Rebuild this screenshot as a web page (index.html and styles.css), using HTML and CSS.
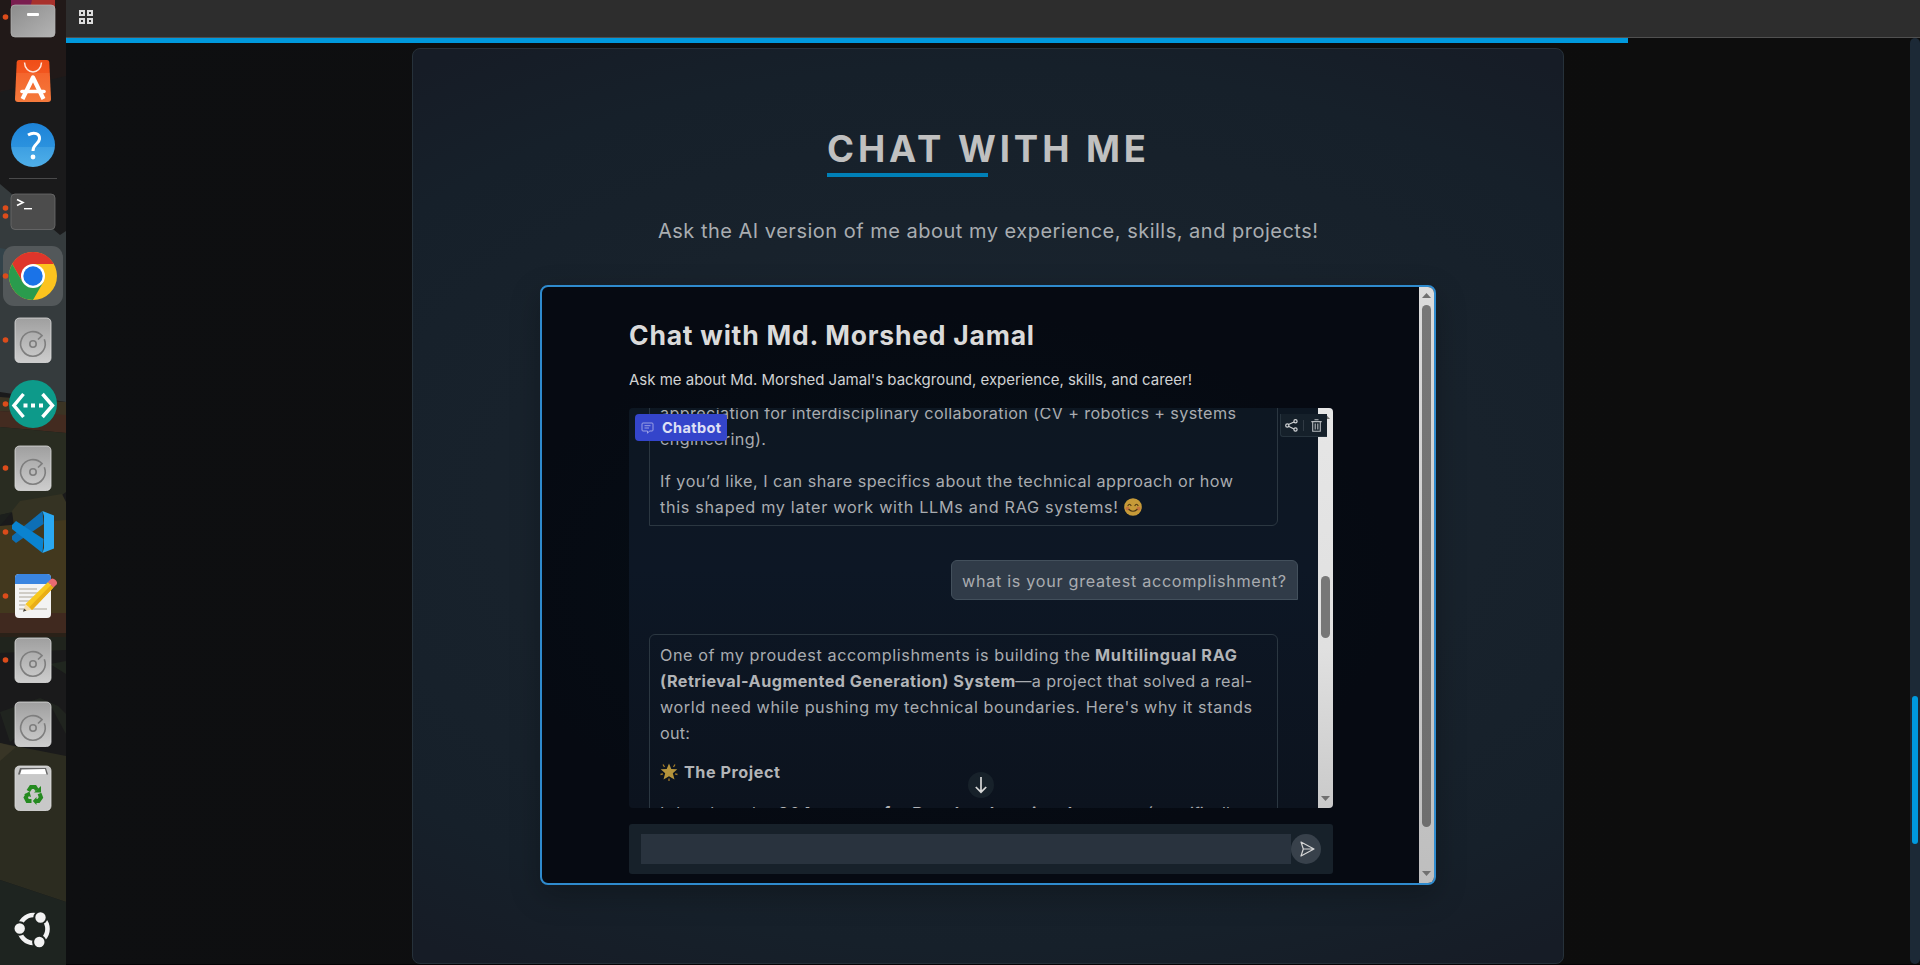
FILE: index.html
```html
<!DOCTYPE html>
<html lang="en">
<head>
<meta charset="utf-8">
<title>Chat with me</title>
<link rel="stylesheet" href="styles.css">
</head>
<body>
<svg class="defs" width="0" height="0" aria-hidden="true">
  <defs>
    <linearGradient id="metal" x1="0" y1="0" x2="0" y2="1"><stop offset="0" stop-color="#9f9f9f"/><stop offset="1" stop-color="#cdcdcd"/></linearGradient>
    <linearGradient id="metal2" x1="0" y1="0" x2="1" y2="1"><stop offset="0" stop-color="#8c8c8c"/><stop offset="1" stop-color="#b4b4b4"/></linearGradient>
    <linearGradient id="help" x1="0" y1="0" x2="0" y2="1"><stop offset="0" stop-color="#1d83d8"/><stop offset=".54" stop-color="#2b92de"/><stop offset=".55" stop-color="#3d9fe2"/><stop offset="1" stop-color="#4fafe9"/></linearGradient>
    <linearGradient id="bag" x1="0" y1="0" x2="0" y2="1"><stop offset="0" stop-color="#f04e17"/><stop offset=".3" stop-color="#f2561f"/><stop offset=".31" stop-color="#f4652d"/><stop offset="1" stop-color="#f57a3c"/></linearGradient>
    <symbol id="disk" viewBox="0 0 66 64">
      <rect x="15" y="10" width="36" height="44.500" rx="4.500" fill="url(#metal)" stroke="#dedede" stroke-width=".8"/>
      <path d="M44.300 31.200A12.300 12.300 0 1 1 42 27.600L38 31.500" fill="none" stroke="#7e7e7e" stroke-width="1.600"/>
      <circle cx="33" cy="36" r="3.200" fill="none" stroke="#7e7e7e" stroke-width="1.600"/>
    </symbol>
  </defs>
</svg>
<div class="desktop">
  <nav class="dock">
    <svg class="wallpaper" viewBox="0 0 66 965" width="66" height="965">
      <rect width="66" height="965" fill="#1a1a1b"/>
      <path d="M0 0H66V76L40 82 0 92Z" fill="#211918"/>
      <path d="M0 184 40 218 60 235 66 231V402L0 392Z" fill="#353b3d"/>
      <path d="M0 248 34 254 0 276Z" fill="#33434a"/>
      <path d="M0 397 66 402V417L0 411Z" fill="#3b3424"/>
      <path d="M0 411 66 415V433L0 427Z" fill="#432b20"/>
      <path d="M0 427 66 433V492L62 495 30 500 15 512 0 515Z" fill="#292c21"/>
      <path d="M0 515 12 512 0 526Z" fill="#1c1f1c"/>
      <path d="M12 511 20 501 62 494 66 502V522L14 526Z" fill="#353323"/>
      <path d="M0 526 66 520V613H0Z" fill="#42381e"/>
      <path d="M0 613H66V633H0Z" fill="#40291f"/>
      <path d="M0 633H66V637H0Z" fill="#2a2118"/>
      <path d="M0 637H66V650L0 653Z" fill="#20241d"/>
      <path d="M50 664 66 661V674Z" fill="#20261f"/>
      <path d="M0 712 40 698 58 706 66 714V734L52 708 10 742Z" fill="#20241f"/>
      <path d="M0 743 66 756V902L0 880Z" fill="#2c2c20"/>
      <path d="M0 743 16 747 0 761Z" fill="#383526"/>
      <path d="M0 880 66 902V965H0Z" fill="#1e2420"/>
    </svg>
    <svg class="slot" viewBox="0 0 66 64"><path d="M11 6H55V24H11Z" fill="#a8312c"/><path d="M11 6H34L30 24H11Z" fill="#7a1e50"/><rect x="11" y="20" width="44" height="32" rx="4" fill="url(#metal2)" stroke="#b5b5b5" stroke-width=".7"/><rect x="27" y="28" width="12" height="3" rx="1" fill="#fff"/><circle class="run" cx="5.500" cy="32" r="2.800"/></svg>
    <svg class="slot" viewBox="0 0 66 64"><path d="M19 11H47Q49 11 49.300 13L51 50Q51 53 48 53H18Q15 53 15 50L16.700 13Q17 11 19 11Z" fill="url(#bag)"/><path d="M24.500 13.500C25 26 41 26 41.500 13.500" fill="none" stroke="#fde7dd" stroke-width="1.500"/><path d="M22.500 50 33 28.500 43.500 50" fill="none" stroke="#fff" stroke-width="4.200" stroke-linejoin="round"/><path d="M22 42.500H44" stroke="#fff" stroke-width="3.600" stroke-linecap="round"/></svg>
    <svg class="slot" viewBox="0 0 66 64"><circle cx="33" cy="32" r="22" fill="url(#help)"/><path d="M28 22C34 18.500 40 20.500 39.500 26C39 31 33 31 33 38" fill="none" stroke="#fff" stroke-width="3"/><circle cx="33" cy="44" r="2.400" fill="#fff"/></svg>
    <div class="rule"></div>
    <svg class="slot" viewBox="0 0 66 64"><rect x="11" y="14" width="44" height="35.500" rx="4" fill="#4c4c4c" stroke="#6c6c6c" stroke-width=".8"/><path d="M17 19.500 23 22.500 17 25.500" fill="none" stroke="#fff" stroke-width="1.600"/><path d="M24 28.700H32" stroke="#fff" stroke-width="1.400"/><circle class="run" cx="5.500" cy="28" r="2.800"/><circle class="run" cx="5.500" cy="36" r="2.800"/></svg>
    <svg class="slot" viewBox="0 0 66 64"><rect x="3" y="2" width="60" height="60" rx="11" fill="#53585a"/><circle cx="33" cy="32" r="24" fill="#fcc31e"/><path d="M33 32 22.600 38 12.200 20A24 24 0 0 1 53.800 20H33Z" fill="#df352b"/><path d="M12.200 20 22.600 38 43.400 38 33 56A24 24 0 0 1 12.200 20Z" fill="#2a9b4d"/><circle cx="33" cy="32" r="12" fill="#fff"/><circle cx="33" cy="32" r="9.700" fill="#1a73e8"/><circle class="run" cx="5.500" cy="32" r="2.800"/></svg>
    <svg class="slot" viewBox="0 0 66 64"><use href="#disk"/><circle class="run" cx="5.500" cy="32" r="2.800"/></svg>
    <svg class="slot" viewBox="0 0 66 64"><circle cx="33" cy="32" r="24" fill="#0d9a8a"/><path d="M23.500 22 14 33.500 23.500 45M42.500 22 52.500 33.500 42.500 45" fill="none" stroke="#fff" stroke-width="3.500"/><path d="M23.500 31.500h4v4h-4zM31 31.500h4v4h-4zM39 31.500h4v4h-4z" fill="#fff"/><circle class="run" cx="5.500" cy="32" r="2.800"/></svg>
    <svg class="slot" viewBox="0 0 66 64"><use href="#disk"/><circle class="run" cx="5.500" cy="32" r="2.800"/></svg>
    <svg class="slot" viewBox="0 0 66 64"><path d="M42.500 11 43.500 24 16 43 12 39.500V36Z" fill="#0d6fb5"/><path d="M12 25 16 21 43.500 39 42.500 53 12 29Z" fill="#0a83d0"/><path d="M42.500 11 54 15.500V48.500L42.500 53 44 48V16Z" fill="#2aa8f2"/><circle class="run" cx="5.500" cy="32" r="2.800"/></svg>
    <svg class="slot" viewBox="0 0 66 64"><rect x="15" y="10" width="36" height="44" rx="4" fill="#f3f3f3"/><path d="M15 20V14Q15 10 19 10H47Q51 10 51 14V20Z" fill="#3a85e0"/><path d="M19 25H37M19 29H39M19 33H36M19 37H33M19 41H31M19 45H47" stroke="#c4c0b6" stroke-width="1.500"/><path d="M23 47.500 25.500 40 32.500 45.500Z" fill="#f5dfae"/><path d="M25.500 40 48 18 53.500 23.500 32 46Z" fill="#f8c91f"/><path d="M29.500 43 51 21 53.500 23.500 32 46Z" fill="#e9ae17"/><path d="M48 18 51 15Q53 13.500 55.500 16Q58 18.500 56.500 20.500L53.500 23.500Z" fill="#e96a72"/><path d="M23 47.800 24 44.500 26.500 46.500Z" fill="#444"/><circle class="run" cx="5.500" cy="32" r="2.800"/></svg>
    <svg class="slot" viewBox="0 0 66 64"><use href="#disk"/><circle class="run" cx="5.500" cy="32" r="2.800"/></svg>
    <svg class="slot" viewBox="0 0 66 64"><use href="#disk"/></svg>
    <svg class="slot" viewBox="0 0 66 64"><rect x="15" y="10" width="36" height="44.500" rx="4.500" fill="#c8c8c8" stroke="#dedede" stroke-width=".8"/><path d="M18 18.500 20 12H46L48 18.500Z" fill="#666"/><path d="M20 18.500 21.500 13.500 45 13 46.500 18.500Z" fill="#fff"/><g fill="none" stroke="#258a20" stroke-width="4"><path d="M28.300 35 31 31H35L37 34"/><path d="M39.500 37.500 41 41.500 38.500 45H35.500"/><path d="M31.500 45H27.500L25.700 41.500 27.500 38.500"/></g><path d="M34 36.500H41V30ZM36.500 41V49L32.800 45ZM24 38.500 29.500 35.500 31 41Z" fill="#258a20"/></svg>
    <svg class="slot launcher" viewBox="0 0 66 64"><circle cx="33.500" cy="32" r="14" fill="none" stroke="#f2f2f2" stroke-width="4.600"/><g fill="#f2f2f2" stroke="#1e2420" stroke-width="2"><circle cx="19.700" cy="31.500" r="6.200"/><circle cx="40.500" cy="20.500" r="6.200"/><circle cx="39.300" cy="45" r="6.200"/></g></svg>
  </nav>
  <div class="browser">
    <header class="tabbar">
      <svg width="14" height="14" viewBox="0 0 14 14"><path d="M1 1h4v4h-4zM9 1h4v4h-4zM1 9h4v4h-4zM9 9h4v4h-4z" fill="none" stroke="#dcdcdc" stroke-width="2"/></svg>
    </header>
    <div class="viewport">
      <main class="page">
        <div class="progress"></div>
        <section class="card">
          <h1 class="title"><span data-width="319">CHAT WITH ME</span></h1>
          <p class="lead"><span data-width="660">Ask the AI version of me about my experience, skills, and projects!</span></p>
          <div class="frame">
            <div class="app">
              <h2 class="app-title"><span data-width="405">Chat with Md. Morshed Jamal</span></h2>
              <p class="app-lead"><span data-width="563">Ask me about Md. Morshed Jamal's background, experience, skills, and career!</span></p>
              <div class="panel">
                <div class="log">
                  <div class="msg bot first">
                    <p><span data-width="576">appreciation for interdisciplinary collaboration (CV + robotics + systems</span></p>
                    <p><span data-width="106">engineering).</span></p>
                    <p class="para"><span data-width="573">If you’d like, I can share specifics about the technical approach or how</span></p>
                    <p><span data-width="458">this shaped my later work with LLMs and RAG systems!</span>
                      <svg class="emoji smile" viewBox="0 0 18 18"><circle cx="9" cy="9" r="8.800" fill="#c69a38"/><circle cx="3.500" cy="10.500" r="2" fill="#c4743c"/><circle cx="14.500" cy="10.500" r="2" fill="#c4743c"/><path d="M4 7.500Q5.500 5 7 7.500M11 7.500Q12.500 5 14 7.500M5 11.500Q9 15 13 11.500" fill="none" stroke="#4a3514" stroke-width="1.200" stroke-linecap="round"/></svg></p>
                  </div>
                  <div class="msg user"><p><span data-width="324">what is your greatest accomplishment?</span></p></div>
                  <div class="msg bot">
                    <p><span data-width="430">One of my proudest accomplishments is building the</span><b class="mid" data-width="147">Multilingual RAG</b></p>
                    <p><b data-width="355">(Retrieval-Augmented Generation) System</b><span data-width="237">—a project that solved a real-</span></p>
                    <p><span data-width="592">world need while pushing my technical boundaries. Here's why it stands</span></p>
                    <p><span data-width="30">out:</span></p>
                    <p class="heading"><svg class="emoji star" viewBox="0 0 18 18"><path d="M9 .5 11.300 6 17.300 6.300 12.800 10.300 14.500 16.500 9 13.200 3.500 16.500 5.200 10.300 .7 6.300 6.700 6Z" fill="#b5943c"/><path d="M3 1.500 4.500 4M15 1.500 13.500 4M.5 11.500 3 10.800M17.500 11.500 15 10.800M9 15.500V18" stroke="#a17927" stroke-width="1.300"/></svg><b data-width="96">The Project</b></p>
                    <p class="heading next"><span data-width="111">I developed a</span><b class="mid2" data-width="376">Q&amp;A system for Bangla educational content</b><span data-width="92">(specifically</span></p>
                  </div>
                </div>
                <div class="bar">
                  <svg class="arrow" viewBox="0 0 9 5"><path d="M0 5 4.500 0 9 5Z"/></svg>
                  <div class="thumb inner"></div>
                  <svg class="arrow" viewBox="0 0 9 5"><path d="M0 0 4.500 5 9 0Z"/></svg>
                </div>
                <div class="label"><svg width="13" height="12" viewBox="0 0 13 12"><path d="M2 1H11Q12 1 12 2V8Q12 9 11 9H8.500L6.500 11.300V9H2Q1 9 1 8V2Q1 1 2 1ZM3.500 3.700H9.500M3.500 6H8" fill="none" stroke="#a5a9e6" stroke-width=".9"/></svg><b data-width="59">Chatbot</b></div>
                <div class="tools">
                  <svg width="13" height="13" viewBox="0 0 13 13"><path d="M3.500 5.600 9 3M3.500 7.200 9 10" stroke="#d2d4d6" stroke-width="1.100"/><g fill="none" stroke="#d2d4d6" stroke-width="1.200"><circle cx="2.300" cy="6.500" r="1.600"/><circle cx="10.500" cy="2.300" r="1.600"/><circle cx="10.500" cy="10.500" r="1.600"/></g></svg>
                  <i></i>
                  <svg width="11" height="13" viewBox="0 0 11 13"><path d="M.3 2.600H10.700M3.500 .7H7.500M1.700 2.600V12.300H9.300V2.600M4.200 4.500V10.500M6.800 4.500V10.500" fill="none" stroke="#b6babe" stroke-width="1.100"/></svg>
                </div>
                <div class="down"><svg width="14" height="18" viewBox="0 0 14 18"><path d="M7 1V16M1.800 11 7 16.200 12.200 11" fill="none" stroke="#d8d8d8" stroke-width="1.700"/></svg></div>
              </div>
              <div class="composer">
                <div class="input"></div>
                <div class="send"><svg width="15" height="16" viewBox="0 0 15 16"><path d="M1 1 14 8 1 15 3.300 8ZM3.300 8H14" fill="none" stroke="#d5d5d5" stroke-width="1.200" stroke-linejoin="round"/></svg></div>
              </div>
            </div>
            <div class="bar outer">
              <svg class="arrow" viewBox="0 0 9 5"><path d="M0 5 4.500 0 9 5Z"/></svg>
              <div class="thumb"></div>
              <svg class="arrow" viewBox="0 0 9 5"><path d="M0 0 4.500 5 9 0Z"/></svg>
            </div>
          </div>
        </section>
      </main>
      <div class="page-bar"><div class="page-thumb"></div></div>
    </div>
  </div>
</div>
<script src="fit.js"></script>
</body>
</html>
```

FILE: fit.js
```js
document.querySelectorAll("[data-width]").forEach(function (el) {
  var want = parseFloat(el.dataset.width);
  el.style.letterSpacing = "0px";
  var count = el.textContent.length;
  var gap = (want - el.getBoundingClientRect().width) / (count - 1);
  el.style.letterSpacing = gap + "px";
  el.style.marginRight = -gap + "px";
});
```

FILE: styles.css
```css
* { box-sizing: border-box; }
body { margin: 0; background: #0d0d0d; font-family: Inter, "Open Sans", sans-serif; overflow: hidden; }
h1, h2, p { margin: 0; }
.defs { position: absolute; }
.desktop { display: flex; width: 1920px; height: 965px; overflow: hidden; }

.dock { position: relative; flex: none; width: 66px; height: 965px; overflow: hidden; display: flex; flex-direction: column; }
.wallpaper { position: absolute; inset: 0; }
.slot { position: relative; flex: none; width: 66px; height: 64px; }
.slot:nth-of-type(2) { margin-top: -15px; }
.rule { position: relative; flex: none; height: 1px; width: 48px; margin: 1px 9px; background: #4a4a4b; }
.launcher { margin-top: 77px; }
.run { fill: #dc4c1b; }

.browser { flex: 1; display: flex; flex-direction: column; min-width: 0; }
.tabbar { flex: none; height: 38px; background: #2d2d2d; border-bottom: 1px solid #505050; padding: 10px 13px; }
.tabbar svg { display: block; }
.viewport { flex: 1; display: flex; min-height: 0; border-bottom: 1px solid #050305; }
.page { flex: 1; background: linear-gradient(90deg, #0e0f11, #0d0d0d 85%); }
.progress { width: 1562px; height: 5px; background: #0099dd; }
.page-bar { width: 10px; border-radius: 5px; background: #1c2936; padding: 658px 2px 0; }
.page-thumb { height: 148px; border-radius: 3px; background: #0099dd; }

.card { width: 1152px; height: 916px; margin: 5px 0 0 346px; border: 1px solid #26313a; border-radius: 8px; background: radial-gradient(ellipse 900px 520px at 50% 50%, #1a2632 0%, #18222c 55%, #16202a 85%, #161c26 105%); display: flex; flex-direction: column; align-items: center; padding-top: 75px; }
.title { width: 322px; height: 53px; font-weight: 700; font-size: 36.500px; line-height: 50px; color: #c0c0c0; white-space: nowrap; background: linear-gradient(#0080b8, #0080b8) 0 100% / 161px 4px no-repeat; }
.lead { width: 660px; margin-top: 39px; font-size: 20px; line-height: 30px; color: #a9adb1; white-space: nowrap; }

.frame { width: 896px; height: 600px; margin-top: 39px; border: 2px solid #2f8bce; border-radius: 8px; overflow: hidden; display: flex; background: radial-gradient(ellipse at 45% 50%, #050f17, #060a12 65%); box-shadow: 0 10px 30px rgba(0, 0, 0, .25); }
.app { flex: 1; padding: 30px 86px 0 87px; min-width: 0; }
.app-title { font-size: 26.500px; font-weight: 700; line-height: 36px; color: #dadada; white-space: nowrap; }
.app-lead { margin-top: 15px; font-size: 15px; line-height: 24px; color: #d0d2d3; white-space: nowrap; }

.panel { position: relative; display: flex; height: 400px; margin-top: 16px; border-radius: 4px; overflow: hidden; background: linear-gradient(#0d1722, #0d1725 40%, #0c131e); }
.log { flex: 1; height: 400px; overflow: hidden; display: flex; flex-direction: column; align-items: flex-start; padding: 0 20px; }
.msg { flex: none; padding: 7px 10px 5px; border: 1px solid #2b3741; font-size: 16.200px; line-height: 26px; color: #a9acb0; white-space: nowrap; }
.msg p { display: flex; height: 26px; align-items: baseline; }
.bot { width: 629px; border-radius: 6px 6px 6px 0; }
.first { margin-top: -16px; border-radius: 0 0 6px 0; }
.msg .para { margin-top: 16px; }
.msg .heading { margin-top: 13px; }
.msg .next { margin-top: 15px; }
.user { align-self: flex-end; width: 347px; margin: 34px 0; background: #303b48; border-color: #43505c; border-radius: 6px 6px 0 6px; }
.mid { padding-left: 5px; }
.mid2 { padding: 0 6px; }
.msg b { color: #b2b4b7; }
.emoji { flex: none; width: 18px; height: 18px; align-self: center; }
.smile { margin-left: 6px; }
.star { margin-right: 6px; }

.bar { flex: none; width: 15px; background: linear-gradient(#e6e6e6, #e0e0e0 60%, #cacaca); display: flex; flex-direction: column; align-items: center; padding: 6px 0 7px; }
.arrow { flex: none; display: block; width: 9px; height: 5px; fill: #707070; }
.thumb { flex: none; width: 9px; border-radius: 5px; background: #777; height: 522px; }
.inner { height: 62px; margin: 157px 0 158px; }
.outer { background: linear-gradient(#dcdcdc, #bebebe); }
.outer .thumb { margin: 7px 0 44px; background: linear-gradient(#777, #6e6e6e); }

.label { position: absolute; left: 6px; top: 6px; width: 92px; height: 27px; border-radius: 4px; background: #3445cb; display: flex; align-items: center; padding-left: 6px; font-size: 14.500px; color: #dfe0f5; }
.label b { margin-left: 8px; }
.tools { position: absolute; left: 651px; top: 6px; width: 47px; height: 23px; border: 1px solid #26333d; border-width: 0 0 1px 1px; border-radius: 0 0 0 3px; background: #15202a; display: flex; align-items: center; padding-left: 4px; }
.tools i { width: 1px; height: 11px; margin: 0 7px 0 5px; background: #303a44; }
.down { position: absolute; left: 339px; top: 364px; width: 26px; height: 26px; border-radius: 50%; background: #17212a; display: flex; align-items: center; justify-content: center; }

.composer { display: flex; align-items: center; height: 50px; margin-top: 16px; padding: 0 12px; border-radius: 3px; background: #17212a; }
.input { flex: 1; height: 30px; background: #29333e; }
.send { flex: none; width: 30px; height: 30px; border-radius: 50%; background: #38414b; display: flex; align-items: center; justify-content: center; padding-left: 2px; }
```
